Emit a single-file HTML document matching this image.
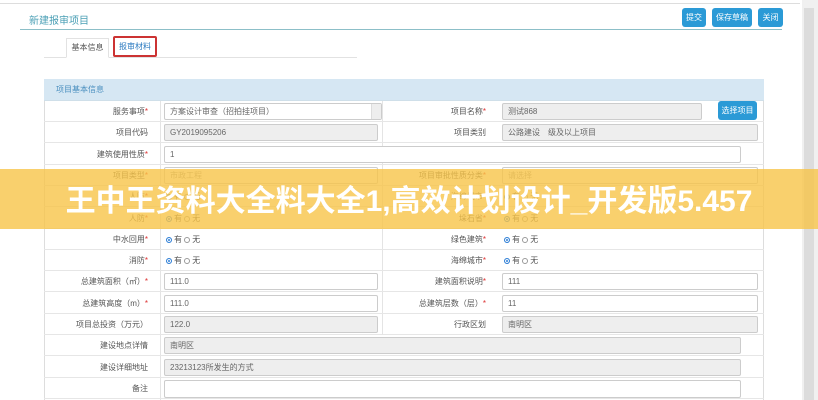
<!DOCTYPE html>
<html><head><meta charset="utf-8"><style>
*{margin:0;padding:0;box-sizing:border-box}
body{width:818px;height:400px;overflow:hidden;background:#fff;font-family:"Liberation Sans","Noto Sans CJK SC",sans-serif;font-size:8px;color:#666;position:relative}
.a{position:absolute}
.btn{position:absolute;background:#2b9ad6;color:#fff;border-radius:3px;font-size:8px;text-align:center;line-height:19px;height:19px;top:8px}
.row{position:absolute;left:44px;width:720px;height:21px;border-bottom:1px solid #e6e6e6}
.lab{position:absolute;text-align:right;line-height:21px;font-size:8px;color:#555}
.inp{position:absolute;height:17px;border:1px solid #ccc;border-radius:2px;line-height:15px;padding-left:5px;font-size:8px;color:#666;background:#fff}
.g{background:#eee}
.r{color:#d33}
.rad{position:absolute;line-height:21px;font-size:8px;color:#555}
.dot{display:inline-block;width:6px;height:6px;border-radius:50%;border:1px solid #999;vertical-align:-1px;margin-right:2px}
.on{background:#2f7fd6;border-color:#2f7fd6;box-shadow:inset 0 0 0 1px #fff}
</style></head><body>
<div class="a" style="left:0;top:3px;width:800px;height:1px;background:#ddd"></div>
<div class="a" style="left:802px;top:0;width:16px;height:400px;background:#f0f0f0"></div>
<div class="a" style="left:804px;top:8px;width:10px;height:392px;background:#dcdcdc"></div>
<div class="a" style="left:29px;top:12px;font-size:10px;color:#4a9fb5">新建报审项目</div>
<div class="a" style="left:20px;top:29px;width:762px;height:1px;background:#8cbfc8"></div>
<div class="btn" style="left:682px;width:24px">提交</div>
<div class="btn" style="left:712px;width:40px">保存草稿</div>
<div class="btn" style="left:758px;width:25px">关闭</div>
<div class="a" style="left:44px;top:57px;width:313px;height:1px;background:#e2e2e2"></div>
<div class="a" style="left:66px;top:38px;width:43px;height:20px;border:1px solid #e2e2e2;border-bottom:1px solid #fff;background:#fff;text-align:center;line-height:18px;color:#555">基本信息</div>
<div class="a" style="left:113px;top:36px;width:44px;height:21px;border:2px solid #c33;border-radius:2px;text-align:center;line-height:17px;color:#2b7ac0">报审材料</div>
<div class="a" style="left:44px;top:79px;width:720px;height:321px;border-left:1px solid #ddd;border-right:1px solid #ddd"></div>
<div class="a" style="left:44px;top:79px;width:720px;height:22px;background:#d6e7f3;border-bottom:1px solid #cfdfe9;color:#4a8fbf;line-height:22px;padding-left:12px">项目基本信息</div>
<div class="a" style="left:160px;top:101px;width:1px;height:299px;background:#e4e4e4"></div>
<div class="a" style="left:382px;top:101px;width:1px;height:212px;background:#e4e4e4"></div>

<div class="row" style="top:101px"></div>
<div class="lab" style="left:44px;top:101px;width:104px">服务事项<span class="r">*</span></div>
<div class="inp" style="left:164px;top:103px;width:218px">方案设计审查（招拍挂项目）<span style="position:absolute;right:0;top:0;width:10px;height:15px;background:#eee;border-left:1px solid #ddd"></span></div>
<div class="lab" style="left:382px;top:101px;width:104px">项目名称<span class="r">*</span></div>
<div class="inp g" style="left:502px;top:103px;width:200px">测试868</div>
<div class="a" style="left:718px;top:101px;width:39px;height:19px;background:#2b9ad6;border-radius:3px;color:#fff;text-align:center;line-height:19px">选择项目</div>

<div class="row" style="top:122px"></div>
<div class="lab" style="left:44px;top:122px;width:104px">项目代码</div>
<div class="inp g" style="left:164px;top:124px;width:214px">GY2019095206</div>
<div class="lab" style="left:382px;top:122px;width:104px">项目类别</div>
<div class="inp g" style="left:502px;top:124px;width:256px">公路建设　级及以上项目</div>

<div class="row" style="top:144px"></div>
<div class="lab" style="left:44px;top:144px;width:104px">建筑使用性质<span class="r">*</span></div>
<div class="inp" style="left:164px;top:146px;width:577px">1</div>

<div class="row" style="top:165px"></div>
<div class="lab" style="left:44px;top:165px;width:104px">项目类型<span class="r">*</span></div>
<div class="inp" style="left:164px;top:167px;width:214px;color:#999">市政工程</div>
<div class="lab" style="left:382px;top:165px;width:104px">项目审批性质分类<span class="r">*</span></div>
<div class="inp" style="left:502px;top:167px;width:256px;color:#999">请选择</div>

<div class="row" style="top:186px"></div>
<div class="lab" style="left:44px;top:186px;width:104px">人防<span class="r">*</span></div>
<div class="rad" style="left:166px;top:186px"><span class="dot on"></span>有 <span class="dot"></span>无</div>
<div class="lab" style="left:382px;top:186px;width:104px">海绵城市<span class="r">*</span></div>
<div class="rad" style="left:504px;top:186px"><span class="dot on"></span>有 <span class="dot"></span>无</div>

<div class="row" style="top:208px"></div>
<div class="lab" style="left:44px;top:208px;width:104px">人防<span class="r">*</span></div>
<div class="rad" style="left:166px;top:208px"><span class="dot on"></span>有 <span class="dot"></span>无</div>
<div class="lab" style="left:382px;top:208px;width:104px">垛石省<span class="r">*</span></div>
<div class="rad" style="left:504px;top:208px"><span class="dot on"></span>有 <span class="dot"></span>无</div>

<div class="row" style="top:229px"></div>
<div class="lab" style="left:44px;top:229px;width:104px">中水回用<span class="r">*</span></div>
<div class="rad" style="left:166px;top:229px"><span class="dot on"></span>有 <span class="dot"></span>无</div>
<div class="lab" style="left:382px;top:229px;width:104px">绿色建筑<span class="r">*</span></div>
<div class="rad" style="left:504px;top:229px"><span class="dot on"></span>有 <span class="dot"></span>无</div>

<div class="row" style="top:250px"></div>
<div class="lab" style="left:44px;top:250px;width:104px">消防<span class="r">*</span></div>
<div class="rad" style="left:166px;top:250px"><span class="dot on"></span>有 <span class="dot"></span>无</div>
<div class="lab" style="left:382px;top:250px;width:104px">海绵城市<span class="r">*</span></div>
<div class="rad" style="left:504px;top:250px"><span class="dot on"></span>有 <span class="dot"></span>无</div>

<div class="row" style="top:271px"></div>
<div class="lab" style="left:44px;top:271px;width:104px">总建筑面积（㎡）<span class="r">*</span></div>
<div class="inp" style="left:164px;top:273px;width:214px">111.0</div>
<div class="lab" style="left:382px;top:271px;width:104px">建筑面积说明<span class="r">*</span></div>
<div class="inp" style="left:502px;top:273px;width:256px">111</div>

<div class="row" style="top:293px"></div>
<div class="lab" style="left:44px;top:293px;width:104px">总建筑高度（m）<span class="r">*</span></div>
<div class="inp" style="left:164px;top:295px;width:214px">111.0</div>
<div class="lab" style="left:382px;top:293px;width:104px">总建筑层数（层）<span class="r">*</span></div>
<div class="inp" style="left:502px;top:295px;width:256px">11</div>

<div class="row" style="top:314px"></div>
<div class="lab" style="left:44px;top:314px;width:104px">项目总投资（万元）</div>
<div class="inp g" style="left:164px;top:316px;width:214px">122.0</div>
<div class="lab" style="left:382px;top:314px;width:104px">行政区划</div>
<div class="inp g" style="left:502px;top:316px;width:256px">南明区</div>
<div class="a" style="left:382px;top:314px;width:1px;height:21px;background:#e4e4e4"></div>

<div class="row" style="top:335px"></div>
<div class="lab" style="left:44px;top:335px;width:104px">建设地点详情</div>
<div class="inp g" style="left:164px;top:337px;width:577px">南明区</div>
<div class="row" style="top:357px"></div>
<div class="lab" style="left:44px;top:357px;width:104px">建设详细地址</div>
<div class="inp g" style="left:164px;top:359px;width:577px">23213123所发生的方式</div>
<div class="row" style="top:378px"></div>
<div class="lab" style="left:44px;top:378px;width:104px">备注</div>
<div class="inp" style="left:164px;top:380px;width:577px;height:18px"></div>

<div class="a" style="left:0;top:169px;width:818px;height:60px;background:rgba(247,196,72,0.8)"></div>
<div class="a" style="left:0;top:184px;width:818px;text-align:center;font-size:30px;font-weight:bold;color:#fff;line-height:36px;font-family:'Liberation Sans','Noto Sans CJK SC',sans-serif">王中王资料大全料大全1,高效计划设计_开发版5.457</div>
</body></html>
